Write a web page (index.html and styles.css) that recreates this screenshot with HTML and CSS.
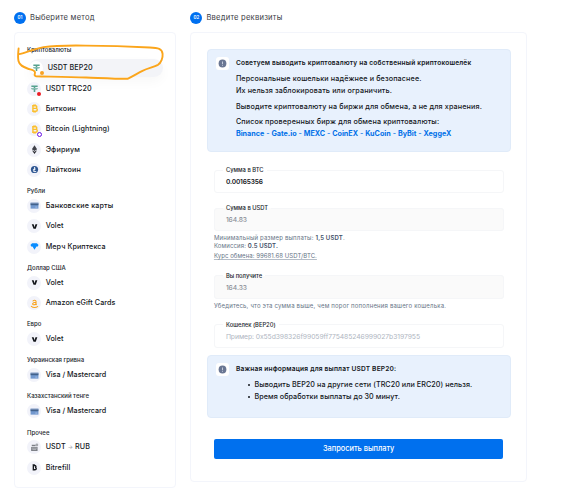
FILE: index.html
```html
<!DOCTYPE html>
<html lang="ru">
<head>
<meta charset="utf-8">
<title>Вывод средств</title>
<link rel="stylesheet" href="styles.css">
</head>
<body>
<svg class="defs" aria-hidden="true">
  <symbol id="tether" viewBox="0 0 14 14"><path d="M3 3.2h8v2H8v1.1c2 .1 3.5.5 3.5 1s-1.500.9-3.500 1v3H6v-3c-2-.1-3.500-.5-3.500-1s1.500-.9 3.500-1V5.200H3z" fill="#55a18e"/><path d="M3.500 7.300h7" stroke="#dcebea" stroke-width=".6"/></symbol>
  <symbol id="btc" viewBox="0 0 14 14"><path d="M5 3v8M4 3.400h4.300c2.200 0 2.200 3.300 0 3.400H5h3.700c2.500.1 2.500 3.800 0 3.800H4M6.200 2v1.400M8 2v1.400M6.200 10.600V12M8 10.600V12" fill="none" stroke="#fbbf2d" stroke-width="1.800"/></symbol>
  <symbol id="eth" viewBox="0 0 14 14"><path d="M7 1.500l3.300 5.300L7 8.800 3.700 6.800z" fill="#3f4048"/><path d="M3.700 7.800L7 9.800l3.300-2L7 12.600z" fill="#24252b"/></symbol>
  <symbol id="ltc" viewBox="0 0 14 14"><circle cx="7" cy="7" r="4.600" fill="#2c5591"/><path d="M7.300 3.800L6 9.700h3.200M4.900 7.700l3.600-1.400" fill="none" stroke="#fff" stroke-width="1.200"/></symbol>
  <symbol id="card" viewBox="0 0 14 14"><path d="M2 3.500h10v7.500H2z" fill="#7298cf"/><path d="M2 3.500h10v1.700H2z" fill="#6d87ae"/><path d="M2 5.200h10v1.400H2z" fill="#3e5d86"/><path d="M8 9h2.600" stroke="#b7cceb" stroke-width=".9"/></symbol>
  <symbol id="volet" viewBox="0 0 14 14"><path d="M3.500 4.200h2.400L7.200 7.800 8.200 4.200h2.400L8.600 10H5.800z" fill="#111419"/></symbol>
  <symbol id="merch" viewBox="0 0 14 14"><path d="M1.800 5l2.200-2.100h6l2.200 2.100-1.500 2.300-1.200-.3L7 11.200 4.500 7l-1.200.3z" fill="#078bff"/></symbol>
  <symbol id="amazon" viewBox="0 0 14 14"><path d="M4.800 4.200C5.200 2.200 9 2.300 9 4.300V8l.8.900M9 5.300C3.600 5.200 4 8.900 6.200 8.700 7.600 8.700 9 7.500 9 6.300M2.500 10.400c2.500 2 6.500 2 9 .2" fill="none" stroke="#f9a21c" stroke-width="1.300"/></symbol>
  <symbol id="rub" viewBox="0 0 14 14"><path d="M3.500 3.500h5v2h-5zM2.700 6.300h8.200v5H2.700z" fill="#7d8087"/><path d="M3.500 7.800h6.600M4.300 9.600h4.800" stroke="#d7d9de" stroke-width=".7"/><circle cx="10" cy="3.800" r="1.800" fill="#a5a8ae"/></symbol>
  <symbol id="refill" viewBox="0 0 14 14"><path d="M5.500 4.400h1.800c2 0 2 2.600.3 2.600 2.200 0 2.200 2.900-.1 2.900h-2z" fill="none" stroke="#15181d" stroke-width="1.700"/><path d="M4.700 3.200l3 .5" stroke="#15181d" stroke-width="1"/></symbol>
  <symbol id="info" viewBox="0 0 14 14"><circle cx="7" cy="7" r="4.200" fill="#697693"/><path d="M7 4.800v2.700M7 8.300v1" stroke="#c3cbdc" stroke-width="1.100"/></symbol>
</svg>
<main class="page">
  <section class="methods">
    <h1 class="step"><span class="num">01</span><span>Выберите метод</span></h1>
    <div class="panel list">
      <h2 class="first">Криптовалюты</h2>
      <div class="row selected"><i class="ico"><svg><use href="#tether"/></svg><b class="dot orange"></b></i><span>USDT BEP20</span></div>
      <div class="row"><i class="ico"><svg><use href="#tether"/></svg><b class="dot red"></b></i><span>USDT TRC20</span></div>
      <div class="row"><i class="ico"><svg><use href="#btc"/></svg></i><span class="wide">Биткоин</span></div>
      <div class="row"><i class="ico"><svg><use href="#btc"/></svg><b class="dot violet"></b></i><span>Bitcoin (Lightning)</span></div>
      <div class="row"><i class="ico"><svg><use href="#eth"/></svg></i><span class="wide">Эфириум</span></div>
      <div class="row"><i class="ico"><svg><use href="#ltc"/></svg></i><span class="wide">Лайткоин</span></div>
      <h2>Рубли</h2>
      <div class="row"><i class="ico"><svg><use href="#card"/></svg></i><span class="cards">Банковские карты</span></div>
      <div class="row"><i class="ico"><svg><use href="#volet"/></svg></i><span>Volet</span></div>
      <div class="row"><i class="ico"><svg><use href="#merch"/></svg></i><span>Мерч Криптекса</span></div>
      <h2>Доллар США</h2>
      <div class="row"><i class="ico"><svg><use href="#volet"/></svg></i><span>Volet</span></div>
      <div class="row"><i class="ico"><svg><use href="#amazon"/></svg></i><span>Amazon eGift Cards</span></div>
      <h2>Евро</h2>
      <div class="row"><i class="ico"><svg><use href="#volet"/></svg></i><span>Volet</span></div>
      <h2>Украинская гривна</h2>
      <div class="row"><i class="ico"><svg><use href="#card"/></svg></i><span class="visa">Visa / Mastercard</span></div>
      <h2>Казахстанский тенге</h2>
      <div class="row"><i class="ico"><svg><use href="#card"/></svg></i><span class="visa">Visa / Mastercard</span></div>
      <h2>Прочее</h2>
      <div class="row"><i class="ico"><svg><use href="#rub"/></svg></i><span class="swap">USDT <em>→</em> RUB</span></div>
      <div class="row"><i class="ico"><svg><use href="#refill"/></svg></i><span>Bitrefill</span></div>
      <svg class="marker" viewBox="15 33 160 50"><path d="M18.600 48.500C18.300 52 17.600 57 18.500 61c1 4.500 5 6 9 7.500 3.500 1.300 7.500 1.500 7.500 4-.3 2-1 3.500 1 3.700 10 .2 30 1 50 1.300 14 .5 28 1.300 41.500 1.300 6-2.800 10-5.500 15-8 6-3 11-3.500 15.500-6 3-2 5-7 4.600-11-.6-5-4-6-13-6.300-20-1-40-1.700-64-1.900-15-.2-32 0-42 1.500-10 2-18 5.500-24.700 7.100"/></svg>
    </div>
  </section>
  <section class="details">
    <h1 class="step"><span class="num">02</span><span>Введите реквизиты</span></h1>
    <div class="panel form">
      <div class="notice advice">
        <span class="info"><svg><use href="#info"/></svg></span>
        <div class="copy">
          <h3 class="t1">Советуем выводить криптовалюту на собственный криптокошелёк</h3>
          <p>Персональные кошельки надёжнее и безопаснее.<br>Их нельзя заблокировать или ограничить.</p>
          <p>Выводите криптовалюту на биржи для обмена, а не для хранения.</p>
          <p>Список проверенных бирж для обмена криптовалюты:<br><span class="links"><a>Binance</a> - <a>Gate.io</a> - <a>MEXC</a> - <a>CoinEX</a> - <a>KuCoin</a> - <a>ByBit</a> - <a>XeggeX</a></span></p>
        </div>
      </div>
      <fieldset class="field btc"><legend>Сумма в BTC</legend><span>0.00165356</span></fieldset>
      <fieldset class="field off usdt"><legend>Сумма в USDT</legend><span>164.83</span></fieldset>
      <div class="hint limits"><p>Минимальный размер выплаты: <b>1,5 USDT</b>.</p><p class="fee">Комиссия: <b>0.5 USDT.</b></p><p class="rate"><u>Курс обмена: 99681.68 USDT/BTC.</u></p></div>
      <fieldset class="field off receive"><legend>Вы получите</legend><span>164.33</span></fieldset>
      <p class="hint sure">Убедитесь, что эта сумма выше, чем порог пополнения вашего кошелька.</p>
      <fieldset class="field wallet"><legend>Кошелек (BEP20)</legend><span>Пример: 0x55d398326f99059ff775485246999027b3197955</span></fieldset>
      <div class="notice important">
        <span class="info"><svg><use href="#info"/></svg></span>
        <div class="copy">
          <h3 class="t2">Важная информация для выплат USDT BEP20:</h3>
          <ul><li>Выводить BEP20 на другие сети (TRC20 или ERC20) нельзя.</li><li>Время обработки выплаты до 30 минут.</li></ul>
        </div>
      </div>
      <button class="submit">Запросить выплату</button>
    </div>
  </section>
</main>
</body>
</html>
```
FILE: styles.css
```css
* { box-sizing: border-box; }
body { margin: 0; background: #fff; color: #14171c; font: 500 7.2px/12px Inter, "Noto Sans", sans-serif; }
h1, h2, h3, p, ul { margin: 0; padding: 0; font-weight: 500; }
.defs { position: absolute; width: 0; height: 0; }
.page { display: flex; gap: 14.400px; width: 585px; height: 500px; padding: 12.400px 0 0 14px; }
.methods { width: 162px; }
.details { width: 337px; }
.step { display: flex; align-items: center; gap: 4px; height: 12px; color: #3c4046; font-size: 7.6px; font-weight: 400; letter-spacing: .22px; }
.num { display: grid; place-items: center; width: 12px; height: 12px; border-radius: 50%; background: #0070f0; color: #fff; font-size: 4.5px; font-weight: 600; letter-spacing: 0; }
.panel { margin-top: 8px; border: 1px solid #f3f5fb; border-radius: 4px; }
.list { position: relative; height: 455.500px; padding: 7px 12px 0; }
.list h2 { height: 15.750px; padding-top: 5px; color: #22262c; font-size: 6px; line-height: 11px; white-space: nowrap; }
.list h2.first { height: 17.600px; padding-top: 4px; }
.row { display: flex; align-items: center; gap: 4.700px; height: 20.350px; white-space: nowrap; letter-spacing: .07px; }
.wide { letter-spacing: .15px; }
.cards { letter-spacing: .14px; }
.visa { letter-spacing: 0; }
.swap { letter-spacing: .1px; }
.row em { color: #a5a8ad; font-style: normal; font-size: 5.500px; }
.ico { position: relative; display: grid; place-items: center; width: 14px; height: 14px; border-radius: 50%; background: #f2f3fa; }
.ico svg { width: 11px; height: 11px; }
.selected { width: 134px; height: 18px; margin: 1px 0 1.350px 2px; border-radius: 9px; background: #f3f4f8; box-shadow: 0 5px 12px #00000008; }
.selected .ico { background: #fff; }
.dot { position: absolute; right: 0; bottom: 0; width: 4px; height: 4px; border-radius: 50%; }
.orange { right: -1px; background: #f8a225; }
.red { background: #ed1c24; }
.violet { width: 5.500px; height: 5.500px; right: -1px; bottom: -1px; border: 1.800px solid #6911e5; background: #fff; }
.marker { position: absolute; left: 0; top: 0; width: 160px; height: 50px; overflow: visible; fill: none; stroke: #fba51b; stroke-width: 1.900px; stroke-linejoin: round; stroke-linecap: round; }
.form { height: 449.500px; padding: 15.300px 15px 0 15.500px; }
.notice { display: flex; gap: 7px; border: 1px solid #e0ebf9; border-radius: 4px; background: #e8f1fd; }
.advice { height: 103px; padding: 7.500px 8px; }
.important { height: 63px; padding: 7.500px 8px; margin-top: 7px; }
.info { display: grid; place-items: center; flex: none; width: 13px; height: 13px; border-radius: 3px; background: #fff; }
.info svg { width: 13px; height: 13px; }
.copy { white-space: nowrap; }
.copy h3 { height: 12px; font-size: 6.600px; font-weight: 600; letter-spacing: .19px; }
.copy .t2 { letter-spacing: .19px; }
.copy p { margin-top: 4px; line-height: 11.700px; letter-spacing: .13px; }
.links { color: #0070e8; letter-spacing: 0; }
.links a { font-weight: 700; }
.copy ul { padding: 3.500px 0 0 18.500px; list-style: none; }
.copy li { display: flex; align-items: center; height: 12.300px; letter-spacing: .06px; }
.copy li::before { content: ""; width: 2.400px; height: 2.400px; margin: 0 4px 0 -6.400px; border-radius: 50%; background: #14171c; }
.field { display: flex; align-items: center; height: 25.700px; min-width: 0; margin: 15.400px 7px 0; padding: 0 11px 1px; border: 1px solid #f5f6f8; border-radius: 3px; font-size: 7px; }
.field legend { height: 6px; padding: 0 3px; margin-left: -3px; color: #22262c; font-size: 5.800px; line-height: 6px; }
.btc span { font-weight: 600; font-size: 6.600px; letter-spacing: -.15px; }
.off { background: #fafafa; color: #8a8f98; }
.off span { font-size: 6.700px; letter-spacing: -.05px; }
.off legend { background: linear-gradient(#fff 50%, #fafafa 50%); }
.usdt { margin-top: 12.300px; }
.hint { margin: 3px 7px 0; color: #667486; font-size: 6px; font-weight: 400; line-height: 8px; white-space: nowrap; letter-spacing: .18px; }
.hint p { font-weight: 400; }
.hint b { color: #3f5068; font-weight: 600; }
.fee { letter-spacing: .12px; }
.rate { margin-top: 2.500px; letter-spacing: .06px; }
.rate u { text-underline-offset: 1px; text-decoration-color: #b5bdc7; }
.receive { margin-top: 12.600px; }
.sure { letter-spacing: .18px; }
.wallet { height: 26.200px; margin-top: 12px; color: #afb6bf; }
.wallet span { font-size: 6.800px; font-weight: 400; letter-spacing: -.08px; }
.submit { display: block; width: 289.500px; height: 20px; margin: 20.800px 0 0 7px; padding: 0; border: 0; border-radius: 2px; background: #0070ee; color: #fff; font: 500 7.400px/20px Inter, sans-serif; }
```
